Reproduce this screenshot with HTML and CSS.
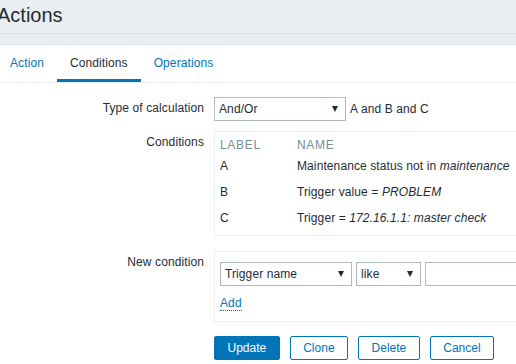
FILE: index.html
```html
<!DOCTYPE html>
<html>
<head>
<meta charset="utf-8">
<link rel="stylesheet" href="styles.css">
</head>
<body>
<div class="page">
  <header class="title-bar"><h1>Actions</h1></header>
  <main class="content">
    <nav class="tabs">
      <a class="tab">Action</a>
      <a class="tab active">Conditions</a>
      <a class="tab">Operations</a>
    </nav>
    <div class="form">
      <div class="row row-calc">
        <div class="lbl">Type of calculation</div>
        <div class="field inline">
          <div class="select w132"><span>And/Or</span><span class="arrow"></span></div>
          <span class="expr">A and B and C</span>
        </div>
      </div>
      <div class="row row-cond">
        <div class="lbl">Conditions</div>
        <div class="field box cond-box">
          <table class="cond-table">
            <thead>
              <tr><th class="c-label">Label</th><th>Name</th></tr>
            </thead>
            <tbody>
              <tr><td>A</td><td>Maintenance status not in <em>maintenance</em></td></tr>
              <tr><td>B</td><td>Trigger value = <em>PROBLEM</em></td></tr>
              <tr><td>C</td><td>Trigger = <em>172.16.1.1: master check</em></td></tr>
            </tbody>
          </table>
        </div>
      </div>
      <div class="row row-new">
        <div class="lbl">New condition</div>
        <div class="field box new-box">
          <div class="inline">
            <div class="select w132"><span>Trigger name</span><span class="arrow"></span></div>
            <div class="select w65"><span>like</span><span class="arrow"></span></div>
            <div class="text-input"></div>
          </div>
          <a class="add-link">Add</a>
        </div>
      </div>
      <div class="row row-buttons">
        <div class="lbl"></div>
        <div class="field buttons">
          <button class="btn primary">Update</button>
          <button class="btn">Clone</button>
          <button class="btn">Delete</button>
          <button class="btn">Cancel</button>
        </div>
      </div>
    </div>
  </main>
</div>
</body>
</html>
```

FILE: styles.css
```css
html, body {
  margin: 0;
  padding: 0;
  width: 516px;
  height: 364px;
  overflow: hidden;
}
body {
  font-family: "Liberation Sans", Arial, sans-serif;
  font-size: 12px;
  letter-spacing: 0.1px;
  color: #1f2c33;
  background: #ebeef0;
}
.page {
  margin-left: -3px;
  width: 560px;
}
.title-bar {
  box-sizing: border-box;
  height: 34px;
  padding-top: 3px;
  border-bottom: 1px solid #dde2e6;
  margin-bottom: 10px;
}
.title-bar h1 {
  margin: 0;
  font-size: 20px;
  font-weight: normal;
  letter-spacing: 0;
  line-height: 24px;
  color: #1f2c33;
}
.content {
  background: #ffffff;
  border-top: 1px solid #dde2e6;
  height: 400px;
}
.tabs {
  display: flex;
  border-bottom: 1px solid #ebeef0;
}
.tab {
  display: block;
  padding: 0 13px;
  line-height: 37px;
  height: 37px;
  color: #0275b8;
}
.tab.active {
  color: #1f2c33;
  box-shadow: inset 0 -3px 0 #0275b8;
}
.form {
  padding-top: 14px;
}
.row {
  display: grid;
  grid-template-columns: 207px 1fr;
  column-gap: 10px;
  align-items: start;
}
.lbl {
  text-align: right;
  line-height: 22px;
  white-space: nowrap;
}
.row-calc { margin-bottom: 10px; }
.row-cond { margin-bottom: 15px; }
.row-new { margin-bottom: 14px; }
.inline {
  display: flex;
  align-items: center;
}
.select {
  box-sizing: border-box;
  flex-shrink: 0;
  height: 24px;
  border: 1px solid #acbbc2;
  display: flex;
  align-items: center;
  justify-content: space-between;
  padding: 0 7px 0 4px;
  background: #fff;
}
.w132 { width: 132px; }
.w65 { width: 65px; margin-left: 4px; }
.arrow {
  width: 0;
  height: 0;
  border-left: 3.5px solid transparent;
  border-right: 3.5px solid transparent;
  border-top: 6px solid #1f2c33;
}
.expr {
  margin-left: 4px;
  flex-shrink: 0;
}
.text-input {
  box-sizing: border-box;
  flex-shrink: 0;
  height: 24px;
  width: 160px;
  border: 1px solid #acbbc2;
  margin-left: 4px;
}
.box {
  box-sizing: border-box;
  border: 1px solid #ebeef0;
  width: 330px;
}
.cond-box {
  padding: 4px 5px 4px 5px;
}
.cond-table {
  border-collapse: collapse;
}
.cond-table th {
  text-align: left;
  font-weight: normal;
  text-transform: uppercase;
  color: #768d99;
  letter-spacing: 0.7px;
  height: 17px;
  padding: 0;
  vertical-align: middle;
}
.cond-table th.c-label {
  width: 77px;
}
.cond-table td {
  height: 26px;
  padding: 0;
  vertical-align: middle;
  white-space: nowrap;
}
.cond-table em {
  font-style: italic;
}
.new-box {
  padding: 10px 5px 10px 5px;
}
.add-link {
  display: inline-block;
  margin-top: 10px;
  line-height: 14px;
  color: #0275b8;
  border-bottom: 1px dotted #0275b8;
}
.buttons {
  display: flex;
  gap: 10px;
}
.btn {
  box-sizing: border-box;
  height: 24px;
  padding: 0 12.5px;
  border: 1px solid #0275b8;
  border-radius: 2px;
  background: #fff;
  color: #0275b8;
  font-family: "Liberation Sans", Arial, sans-serif;
  font-size: 12px;
  letter-spacing: 0;
  line-height: 22px;
}
.btn.primary {
  background: #0275b8;
  color: #fff;
}
```
